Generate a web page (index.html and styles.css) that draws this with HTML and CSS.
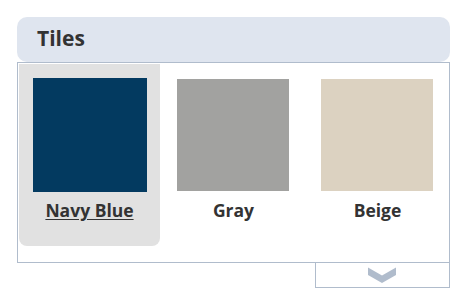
FILE: index.html
```html
<!DOCTYPE html>
<html>
<head>
<meta charset="utf-8">
<link rel="stylesheet" href="styles.css">
</head>
<body>
<div class="widget">
  <div class="header"><span class="title">Tiles</span></div>
  <div class="panel">
    <div class="tile selected">
      <div class="swatch navy"></div>
      <div class="label">Navy Blue</div>
    </div>
    <div class="tile">
      <div class="swatch gray"></div>
      <div class="label">Gray</div>
    </div>
    <div class="tile">
      <div class="swatch beige"></div>
      <div class="label">Beige</div>
    </div>
  </div>
  <div class="tabrow">
    <div class="tab">
      <svg class="chev" width="28" height="16" viewBox="0 0 28 16"><polygon points="0,0.5 14,8.5 28,0.5 28,8 14,16 0,8" fill="#b0bccc"/></svg>
    </div>
  </div>
</div>
</body>
</html>
```
FILE: styles.css
```css
html, body { margin: 0; padding: 0; background: #fff; }
body { font-family: "Open Sans", "Noto Sans", sans-serif; color: #333; }
.widget { width: 433px; margin: 17px 0 0 17px; }
.header {
  height: 45px;
  background: #dfe5ef;
  border-radius: 10px;
  display: flex;
  align-items: center;
  padding-left: 20px;
}
.title { font-size: 21px; font-weight: 700; color: #333; line-height: 1; margin-top: -3px; }
.panel {
  border: 1px solid #b0bccc;
  padding: 1px;
  display: flex;
  gap: 3px;
  box-sizing: border-box;
  height: 201px;
}
.tile {
  width: 141px;
  height: 182px;
  display: flex;
  flex-direction: column;
  align-items: flex-start;
  padding-top: 15px;
  box-sizing: border-box;
  border-radius: 0 0 8px 8px;
}
.tile.selected { background: #e1e1e1; padding-top: 14px; }
.swatch { width: 112px; height: 112px; margin-left: 14px; }
.tile.selected .swatch { width: 114px; height: 114px; }
.navy { background: #033a60; }
.gray { background: #a2a2a0; }
.beige { background: #dcd2c1; }
.label {
  align-self: center;
  font-size: 17.5px;
  font-weight: 700;
  line-height: 24px;
  margin-top: 7px;
  color: #333;
}
.selected .label { text-decoration: underline; text-underline-offset: 2px; margin-top: 6px; }
.tabrow { display: flex; justify-content: flex-end; }
.tab {
  width: 135px;
  height: 26px;
  box-sizing: border-box;
  border: 1px solid #b0bccc;
  border-top: none;
  margin-top: -1px;
  display: flex;
  justify-content: center;
  align-items: center;
}
.chev { display: block; margin-left: -1px; }
```
